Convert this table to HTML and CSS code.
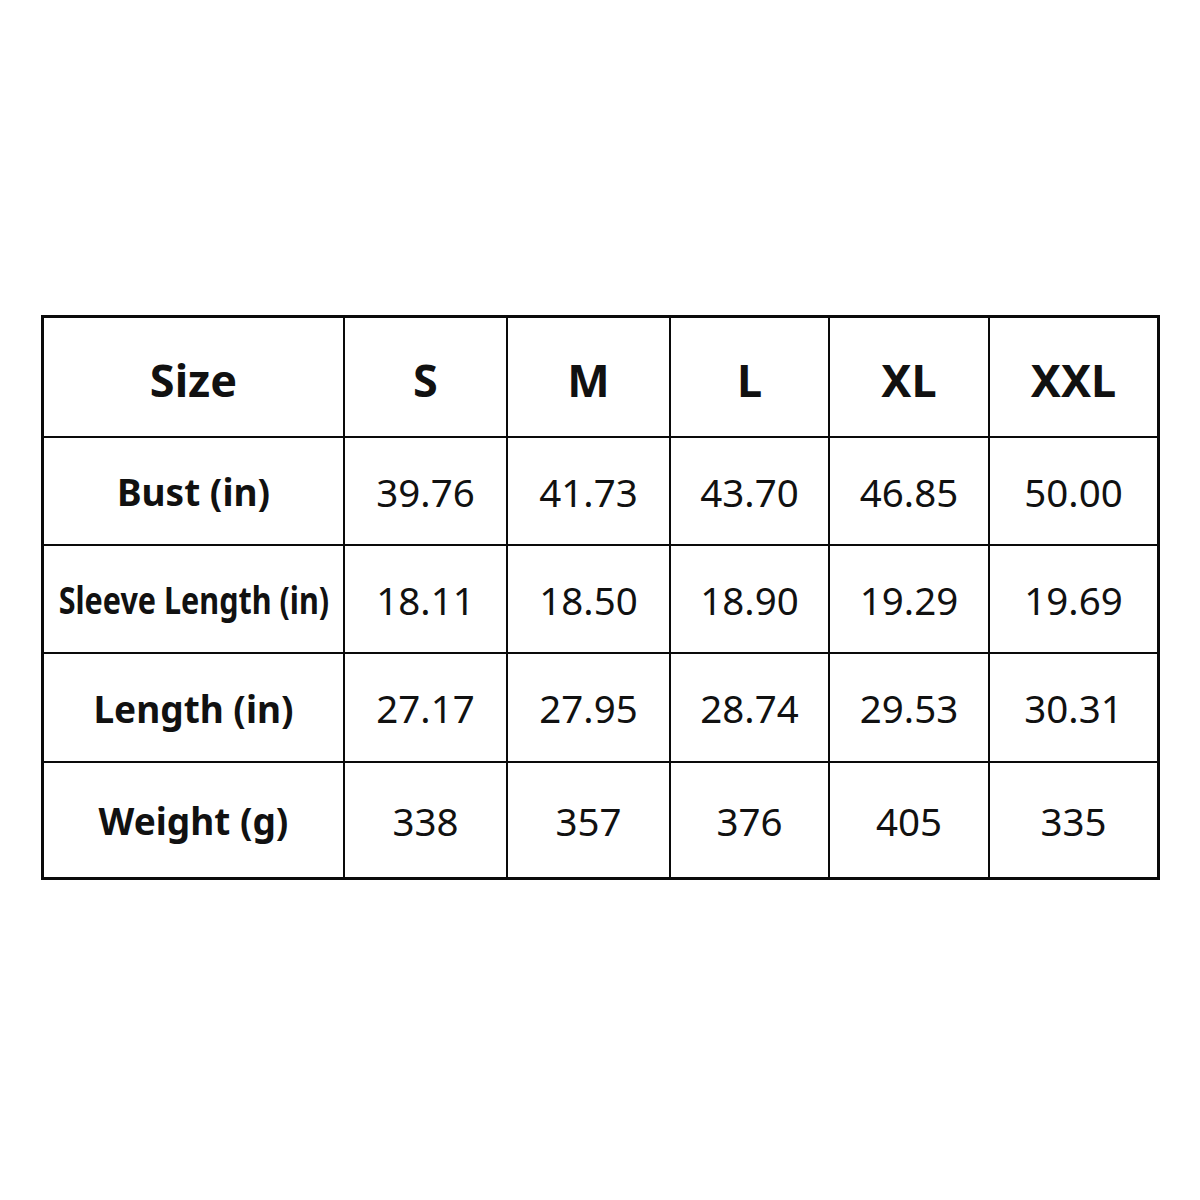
FILE: index.html
```html
<!DOCTYPE html>
<html>
<head>
<meta charset="utf-8">
<link rel="stylesheet" href="styles.css">
</head>
<body>
<div class="page">
  <div class="chart">
    <div class="cell head label">Size</div>
    <div class="cell head">S</div>
    <div class="cell head">M</div>
    <div class="cell head">L</div>
    <div class="cell head">XL</div>
    <div class="cell head">XXL</div>

    <div class="cell label">Bust (in)</div>
    <div class="cell">39.76</div>
    <div class="cell">41.73</div>
    <div class="cell">43.70</div>
    <div class="cell">46.85</div>
    <div class="cell">50.00</div>

    <div class="cell label"><span class="narrow">Sleeve Length (in)</span></div>
    <div class="cell">18.11</div>
    <div class="cell">18.50</div>
    <div class="cell">18.90</div>
    <div class="cell">19.29</div>
    <div class="cell">19.69</div>

    <div class="cell label">Length (in)</div>
    <div class="cell">27.17</div>
    <div class="cell">27.95</div>
    <div class="cell">28.74</div>
    <div class="cell">29.53</div>
    <div class="cell">30.31</div>

    <div class="cell label">Weight (g)</div>
    <div class="cell">338</div>
    <div class="cell">357</div>
    <div class="cell">376</div>
    <div class="cell">405</div>
    <div class="cell">335</div>
  </div>
</div>
</body>
</html>
```
FILE: styles.css
```css
html, body {
  margin: 0;
  padding: 0;
  background: #ffffff;
}
.page {
  width: 1200px;
  height: 1200px;
  padding: 315px 0 0 41px;
  box-sizing: border-box;
}
.chart {
  display: grid;
  grid-template-columns: 299px 161px 161px 157px 158px 167px;
  grid-template-rows: 118px 106px 106px 107px 114px;
  gap: 2px;
  width: 1119px;
  box-sizing: border-box;
  border: 3px solid #0a0a0a;
  background: #0a0a0a;
}
.cell {
  background: #fff;
  display: flex;
  align-items: center;
  justify-content: center;
  font-family: "Noto Sans", "Open Sans", sans-serif;
  font-size: 38.5px;
  color: #111;
  padding-top: 1px;
  box-sizing: border-box;
}
.label {
  font-weight: 700;
  font-size: 37px;
}
.head {
  font-weight: 700;
  font-size: 45px;
  padding-top: 4px;
}
.narrow {
  display: inline-block;
  transform: scaleX(0.825);
  white-space: nowrap;
}
```
